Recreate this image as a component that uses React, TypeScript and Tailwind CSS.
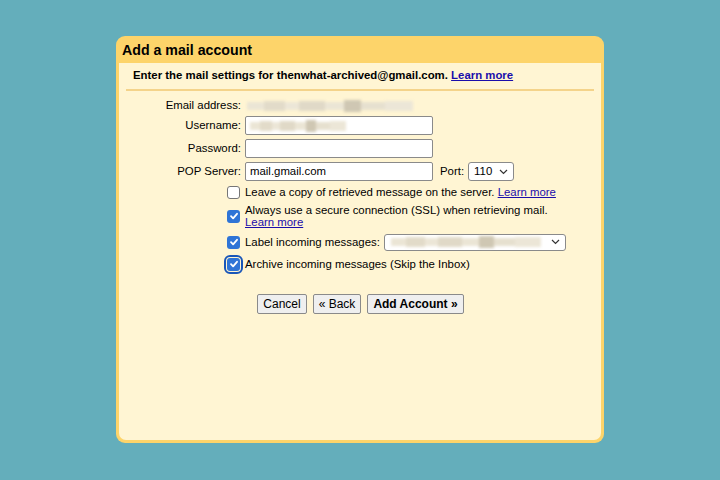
import React from "react";

function Blur({ className }: { className: string }) {
  // pixelated / blurred value, as in the screenshot
  return (
    <div className={`flex items-center gap-0 blur-[1.5px] ${className}`}>
      <div className="h-[8px] flex-[14] bg-[#ebe5d5]" />
      <div className="h-[10px] flex-[18] bg-[#e2dbc9]" />
      <div className="h-[8px] flex-[12] bg-[#ece6d7]" />
      <div className="h-[10px] flex-[22] bg-[#e0d9c7]" />
      <div className="h-[8px] flex-[16] bg-[#ebe5d5]" />
      <div className="h-[12px] flex-[14] bg-[#cfc7b3]" />
      <div className="h-[8px] flex-[20] bg-[#e6e0cf]" />
      <div className="h-[10px] flex-[24] bg-[#ece6d7]" />
    </div>
  );
}

function Check({ checked, focus }: { checked?: boolean; focus?: boolean }) {
  if (!checked) {
    return (
      <div className="h-[13px] w-[13px] shrink-0 rounded-[3px] border border-[#767676] bg-white" />
    );
  }
  return (
    <div
      className={`flex h-[13px] w-[13px] shrink-0 items-center justify-center rounded-[3px] bg-[#2f74d6] ${
        focus ? "outline-2 outline-offset-1 outline-[#1a56b8]" : ""
      }`}
    >
      <svg width="10" height="10" viewBox="0 0 10 10">
        <path d="M2 5.2 L4.1 7.3 L8 2.8" fill="none" stroke="white" strokeWidth="1.8" strokeLinecap="round" strokeLinejoin="round" />
      </svg>
    </div>
  );
}

function Chevron() {
  return (
    <svg width="9" height="6" viewBox="0 0 9 6">
      <path d="M1 1 L4.5 4.5 L8 1" fill="none" stroke="#333" strokeWidth="1.2" />
    </svg>
  );
}

const link = "text-[#1a0dab] underline";

export default function App() {
  return (
    <div
      className="h-[480px] w-[720px] overflow-hidden bg-[#64aebb] pl-[116px] pt-[36px] text-[11.4px] text-black"
      style={{ fontFamily: '"Liberation Sans", Arial, sans-serif' }}
    >
      <div className="flex h-[407px] w-[488px] flex-col rounded-[9px] bg-[#fdd46a]">
        <div className="flex h-[27px] items-center px-[6px] pt-[2px] text-[14.2px] font-bold">
          Add a mail account
        </div>
        <div className="mx-[3px] mb-[3px] flex flex-1 flex-col rounded-b-[7px] bg-[#fff5d3]">
          <div className="px-[14px] pt-[4px] text-[11.4px] font-bold leading-[16px]">
            Enter the mail settings for thenwhat-archived@gmail.com.{" "}
            <span className={link}>Learn more</span>
          </div>
          <div className="mx-[7px] mt-[6px] h-[2px] bg-[#f4d38a]" />

          <div className="mt-[6px] flex flex-col">
            <div className="flex h-[18px] items-center">
              <div className="w-[122px] text-right">Email address:</div>
              <Blur className="ml-[6px] w-[166px]" />
            </div>
            <div className="mt-[1px] flex h-[19px] items-center">
              <div className="w-[122px] text-right">Username:</div>
              <div className="ml-[4px] flex h-[19px] w-[188px] items-center rounded-[2px] border border-[#8a8a8a] bg-white px-[4px]">
                <Blur className="w-[96px]" />
              </div>
            </div>
            <div className="mt-[4px] flex h-[19px] items-center">
              <div className="w-[122px] text-right">Password:</div>
              <div className="ml-[4px] h-[19px] w-[188px] rounded-[2px] border border-[#8a8a8a] bg-white" />
            </div>
            <div className="mt-[4px] flex h-[19px] items-center">
              <div className="w-[122px] text-right">POP Server:</div>
              <div className="ml-[4px] flex h-[19px] w-[188px] items-center rounded-[2px] border border-[#8a8a8a] bg-white px-[4px]">
                mail.gmail.com
              </div>
              <div className="ml-[7px]">Port:</div>
              <div className="ml-[4px] flex h-[19px] w-[46px] items-center justify-between rounded-[3px] border border-[#8a8a8a] bg-white pl-[5px] pr-[5px]">
                <span>110</span>
                <Chevron />
              </div>
            </div>
          </div>

          <div className="ml-[108px] mt-[3px] flex flex-col leading-[12px]">
            <div className="flex h-[16px] items-center gap-[5px]">
              <Check />
              <div>
                Leave a copy of retrieved message on the server.{" "}
                <span className={link}>Learn more</span>
              </div>
            </div>
            <div className="mt-[4px] flex items-center gap-[5px]">
              <Check checked />
              <div>
                Always use a secure connection (SSL) when retrieving mail.
                <br />
                <span className={link}>Learn more</span>
              </div>
            </div>
            <div className="mt-[5px] flex h-[18px] items-center gap-[5px]">
              <Check checked />
              <div>Label incoming messages:</div>
              <div className="ml-[-1px] flex h-[17px] w-[182px] items-center justify-between rounded-[3px] border border-[#8a8a8a] bg-white pl-[6px] pr-[5px]">
                <Blur className="w-[150px]" />
                <Chevron />
              </div>
            </div>
            <div className="mt-[5px] flex h-[16px] items-center gap-[5px]">
              <Check checked focus />
              <div>Archive incoming messages (Skip the Inbox)</div>
            </div>
          </div>

          <div className="ml-[138px] mt-[22px] flex gap-[6px] text-[12px]">
            <div className="flex h-[20px] w-[50px] items-center justify-center rounded-[2px] border border-[#8a8a8a] bg-[#efefef]">
              Cancel
            </div>
            <div className="flex h-[20px] w-[48px] items-center justify-center rounded-[2px] border border-[#8a8a8a] bg-[#efefef]">
              « Back
            </div>
            <div className="flex h-[20px] w-[97px] items-center justify-center rounded-[2px] border border-[#8a8a8a] bg-[#efefef] font-bold">
              Add Account »
            </div>
          </div>
        </div>
      </div>
    </div>
  );
}
